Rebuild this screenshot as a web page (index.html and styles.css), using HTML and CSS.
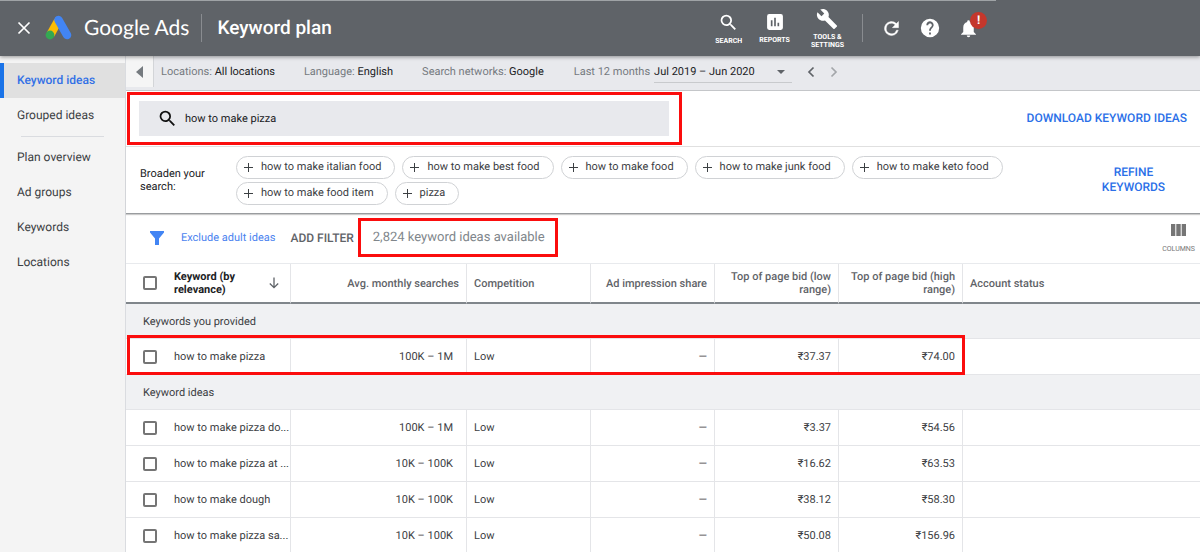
FILE: index.html
```html
<!DOCTYPE html>
<html lang="en">
<head>
<meta charset="utf-8">
<meta name="viewport" content="width=device-width, initial-scale=1">
<title>Keyword plan - Google Ads</title>
<link rel="stylesheet" href="styles.css">
</head>
<body>
<div class="app">
  <header class="topbar">
    <button class="icon-btn close" aria-label="Close"><svg width="14" height="14" viewBox="0 0 14 14"><path d="M1.5 1.5l11 11M12.500 1.500l-11 11" fill="none" stroke="#fff" stroke-width="1.700"/></svg></button>
    <a class="brand" href="#">
      <svg width="28" height="26" viewBox="0 0 28 26"><path d="M5.500 19.500L13 6" stroke="#fbbc04" stroke-width="8.500" fill="none"/><path d="M13.500 5L22 20" stroke="#4285f4" stroke-width="8.500" stroke-linecap="round"/><circle cx="5" cy="20" r="4.400" fill="#34a853"/></svg>
      <span class="brand-name">Google Ads</span>
    </a>
    <h1 class="page-title">Keyword plan</h1>
    <div class="tools">
      <button class="tool"><svg width="21" height="21" viewBox="0 0 24 24"><path fill="#fff" d="M15.5 14h-.79l-.28-.27A6.471 6.471 0 0 0 16 9.5 6.5 6.5 0 1 0 9.5 16c1.61 0 3.09-.59 4.23-1.57l.27.28v.79l5 4.99L20.49 19l-4.99-5zm-6 0C7.01 14 5 11.99 5 9.5S7.01 5 9.5 5 14 7.01 14 9.5 11.99 14 9.5 14z"/></svg><span>SEARCH</span></button>
      <button class="tool"><svg width="20" height="20" viewBox="0 0 24 24"><path fill="#fff" d="M19 2.500H5a2.500 2.500 0 0 0-2.500 2.500v14A2.500 2.500 0 0 0 5 21.500h14a2.500 2.500 0 0 0 2.500-2.500V5A2.500 2.500 0 0 0 19 2.500zM9 17H7v-7h2zm4 0h-2V7h2zm4 0h-2v-4h2z"/></svg><span>REPORTS</span></button>
      <button class="tool tool-wide"><svg width="22" height="22" viewBox="0 0 24 24"><path fill="#fff" d="M22.700 19l-9.100-9.100c.9-2.300.4-5-1.500-6.900-2-2-5-2.400-7.400-1.300L9 6 6 9 1.600 4.700C.4 7.100.9 10.100 2.900 12.100c1.900 1.900 4.600 2.400 6.900 1.500l9.100 9.100c.4.4 1 .4 1.400 0l2.300-2.300c.5-.4.5-1.100.1-1.400z"/></svg><span>TOOLS &amp;<br>SETTINGS</span></button>
    </div>
    <div class="actions">
      <button class="icon-btn" aria-label="Refresh"><svg width="21" height="21" viewBox="0 0 24 24"><path fill="#fff" stroke="#fff" stroke-width=".5" d="M17.650 6.350A8 8 0 1 0 19.730 14h-2.080A6 6 0 1 1 12 6c1.660 0 3.140.69 4.220 1.780L13 11h7V4z"/></svg></button>
      <button class="icon-btn" aria-label="Help"><svg width="22" height="22" viewBox="0 0 24 24"><path fill="#fff" d="M12 2a10 10 0 1 0 0 20 10 10 0 0 0 0-20zm1 17h-2v-2h2zm2.070-7.750l-.9.920C13.450 12.900 13 13.500 13 15h-2v-.5c0-1.100.45-2.100 1.170-2.830l1.240-1.260A2 2 0 1 0 10 9H8a4 4 0 1 1 7.070 2.250z"/></svg></button>
      <button class="icon-btn bell" aria-label="Notifications"><svg width="21" height="21" viewBox="0 0 24 24"><path fill="#fff" d="M12 22a2 2 0 0 0 2-2h-4a2 2 0 0 0 2 2zm6-6v-5c0-3.070-1.640-5.640-4.500-6.320V4a1.500 1.500 0 0 0-3 0v.68C7.630 5.360 6 7.920 6 11v5l-2.500 2.500v.5h17v-.5z"/></svg><span class="badge">!</span></button>
    </div>
  </header>

  <div class="body">
    <nav class="sidebar">
      <a class="nav-item active" href="#">Keyword ideas</a>
      <a class="nav-item" href="#">Grouped ideas</a>
      <hr class="nav-rule">
      <a class="nav-item" href="#">Plan overview</a>
      <a class="nav-item" href="#">Ad groups</a>
      <a class="nav-item" href="#">Keywords</a>
      <a class="nav-item" href="#">Locations</a>
    </nav>

    <main class="main">
      <div class="context">
        <button class="collapse" aria-label="Collapse menu"><svg width="7" height="12" viewBox="0 0 7 12"><path d="M7 0v12L0 6z" fill="#757a7f"/></svg></button>
        <div class="settings">
          <span class="setting">Locations: <b>All locations</b></span>
          <span class="setting">Language: <b>English</b></span>
          <span class="setting">Search networks: <b>Google</b></span>
        </div>
        <span class="period">Last 12 months</span>
        <button class="range">Jul 2019 – Jun 2020<svg width="8" height="4" viewBox="0 0 8 4"><path d="M0 0h8L4 4z" fill="#5f6368"/></svg></button>
        <button class="icon-btn step" aria-label="Previous period"><svg width="8" height="12" viewBox="0 0 8 12"><path d="M6.500 1.500L2 6l4.500 4.500" fill="none" stroke="#5f6368" stroke-width="1.700"/></svg></button>
        <button class="icon-btn step" aria-label="Next period"><svg width="8" height="12" viewBox="0 0 8 12"><path d="M1.500 1.500L6 6l-4.500 4.500" fill="none" stroke="#a3a6aa" stroke-width="1.700"/></svg></button>
      </div>

      <section class="panel">
        <div class="search-row">
          <div class="marked search-mark">
            <label class="search-box">
              <svg width="21" height="21" viewBox="0 0 24 24"><path fill="#111" d="M15.5 14h-.79l-.28-.27A6.471 6.471 0 0 0 16 9.5 6.5 6.5 0 1 0 9.5 16c1.61 0 3.09-.59 4.23-1.57l.27.28v.79l5 4.99L20.49 19l-4.99-5zm-6 0C7.01 14 5 11.99 5 9.5S7.01 5 9.5 5 14 7.01 14 9.5 11.99 14 9.5 14z"/></svg>
              <input class="search-input" type="text" aria-label="Search keywords" value="how to make pizza">
            </label>
          </div>
          <button class="link-btn">DOWNLOAD KEYWORD IDEAS</button>
        </div>
        <div class="broaden">
          <span class="broaden-label">Broaden your search:</span>
          <div class="chips">
            <button class="chip"><i class="plus"></i>how to make italian food</button>
            <button class="chip"><i class="plus"></i>how to make best food</button>
            <button class="chip"><i class="plus"></i>how to make food</button>
            <button class="chip"><i class="plus"></i>how to make junk food</button>
            <button class="chip"><i class="plus"></i>how to make keto food</button>
            <button class="chip"><i class="plus"></i>how to make food item</button>
            <button class="chip"><i class="plus"></i>pizza</button>
          </div>
          <button class="link-btn refine">REFINE KEYWORDS</button>
        </div>
      </section>

      <div class="filters">
        <svg width="14" height="14" viewBox="0 0 14 14"><path d="M0 0h14v1.500L9 7.500V14H5V7.500L0 1.500z" fill="#4285f4"/></svg>
        <a class="filter-link" href="#">Exclude adult ideas</a>
        <button class="add-filter">ADD FILTER</button>
        <span class="marked count">2,824 keyword ideas available</span>
        <button class="columns"><svg width="15" height="12" viewBox="0 0 15 12"><path d="M0 0h4.300v12H0zM5.300 0h4.400v12H5.300zM10.700 0H15v12h-4.300z" fill="#757575"/></svg>COLUMNS</button>
      </div>

      <div class="table-area">
        <table class="grid">
          <colgroup><col class="c-check"><col class="c-key"><col class="c-avg"><col class="c-num"><col class="c-num"><col class="c-num"><col class="c-num"><col></colgroup>
          <thead>
            <tr>
              <th class="check"><input type="checkbox" aria-label="Select all"></th>
              <th class="key"><span class="sort">Keyword (by relevance)<svg width="10" height="12" viewBox="0 0 10 12"><path d="M5 .5v10M.8 6.500L5 10.700l4.200-4.200" fill="none" stroke="#5f6368" stroke-width="1.300"/></svg></span></th>
              <th class="num">Avg. monthly searches</th>
              <th>Competition</th>
              <th class="num">Ad impression share</th>
              <th class="num">Top of page bid (low range)</th>
              <th class="num">Top of page bid (high range)</th>
              <th>Account status</th>
            </tr>
          </thead>
          <tbody>
            <tr class="group"><td colspan="8">Keywords you provided</td></tr>
            <tr class="provided">
              <td class="check"><input type="checkbox" aria-label="Select how to make pizza"><span class="marked row-mark"></span></td>
              <td class="key">how to make pizza</td><td class="num avg">100K – 1M</td><td>Low</td><td class="num">—</td><td class="num">₹37.37</td><td class="num">₹74.00</td><td></td>
            </tr>
            <tr class="group"><td colspan="8">Keyword ideas</td></tr>
            <tr><td class="check"><input type="checkbox" aria-label="Select how to make pizza dough"></td><td class="key">how to make pizza do...</td><td class="num avg">100K – 1M</td><td>Low</td><td class="num">—</td><td class="num">₹3.37</td><td class="num">₹54.56</td><td></td></tr>
            <tr><td class="check"><input type="checkbox" aria-label="Select how to make pizza at home"></td><td class="key">how to make pizza at ...</td><td class="num avg">10K – 100K</td><td>Low</td><td class="num">—</td><td class="num">₹16.62</td><td class="num">₹63.53</td><td></td></tr>
            <tr><td class="check"><input type="checkbox" aria-label="Select how to make dough"></td><td class="key">how to make dough</td><td class="num avg">10K – 100K</td><td>Low</td><td class="num">—</td><td class="num">₹38.12</td><td class="num">₹58.30</td><td></td></tr>
            <tr><td class="check"><input type="checkbox" aria-label="Select how to make pizza sauce"></td><td class="key">how to make pizza sa...</td><td class="num avg">10K – 100K</td><td>Low</td><td class="num">—</td><td class="num">₹50.08</td><td class="num">₹156.96</td><td></td></tr>
          </tbody>
        </table>
      </div>
    </main>
  </div>
</div>
</body>
</html>
```

FILE: styles.css
```css
* { box-sizing: border-box; }
body { margin: 0; font-family: Roboto, "Liberation Sans", sans-serif; font-size: 11px; line-height: 14px; text-rendering: geometricPrecision; color: #3c4043; background: #fff; }
button { font: inherit; color: inherit; text-rendering: inherit; background: none; border: 0; padding: 0; cursor: pointer; }
a { color: inherit; text-decoration: none; }
svg { display: block; flex: none; }
.app { height: 100vh; display: flex; flex-direction: column; overflow: hidden; }
.marked { border: 3px solid #fb0d0d; }

/* Top bar */
.topbar { position: relative; z-index: 2; flex: none; height: 56px; display: flex; align-items: center; padding: 0 17px; color: #fff; background: linear-gradient(#9fa3a6, #9fa3a6) 0 0 / 83% 1px no-repeat #5f6368; box-shadow: 0 1px 4px rgba(0, 0, 0, .4); }
.icon-btn { display: flex; align-items: center; justify-content: center; }
.brand { display: flex; align-items: center; gap: 11px; margin-left: 14px; }
.brand-name { font-family: Lato, sans-serif; font-size: 21px; line-height: 28px; }
.page-title { margin: 0 0 0 12px; padding-left: 15px; border-left: 1px solid #898c90; font-size: 19px; line-height: 28px; font-weight: 500; white-space: nowrap; }
.tools { display: flex; gap: 17px; margin-left: auto; padding-right: 18px; border-right: 1px solid #898c90; height: 28px; align-items: center; }
.tool { display: flex; flex-direction: column; align-items: center; gap: 4px; font-size: 7px; line-height: 8px; font-weight: 700; }
.tool-wide { gap: 3px; margin-left: 4px; }
.actions { display: flex; align-items: center; gap: 17px; margin: 0 204px 0 18px; }
.bell { position: relative; }
.badge { position: absolute; left: 12px; top: -6px; width: 17px; height: 17px; border-radius: 50%; background: #c5372c; color: #fff; font-size: 12px; line-height: 17px; font-weight: 700; }

/* Side navigation */
.body { flex: 1; min-height: 0; display: flex; }
.sidebar { flex: none; width: 125px; padding-top: 7px; background: #f4f4f4; }
.nav-item { display: flex; align-items: center; height: 35px; padding: 0 0 1px 17px; font-size: 12px; }
.nav-item.active { border-left: 4px solid #1a73e8; padding-left: 13px; background: #e0e0e0; color: #3371e6; font-weight: 500; }
.nav-rule { margin: 3px 21px; border: 0; height: 1px; background: #dadce0; }

/* Plan settings */
.main { flex: 1; min-width: 0; display: flex; flex-direction: column; border-left: 1px solid #dadce0; }
.context { flex: none; height: 35px; display: flex; align-items: flex-start; background: #e8e9ed; border-bottom: 1px solid #c4c6c9; color: #757a7f; white-space: nowrap; }
.collapse { width: 28px; height: 31px; padding-left: 10px; background: #f5f5f5; border-right: 1px solid #d3d5d8; }
.settings { display: flex; gap: 29px; padding: 9px 0 0 7px; }
.setting b { font-weight: 400; color: #202124; }
.period { margin-left: 30px; padding-top: 9px; }
.range { display: flex; align-items: center; gap: 22px; margin-left: 4px; padding: 9px 7px 3px 0; color: #202124; border-bottom: 1px solid #c8cacd; }
.step { height: 32px; margin-left: 15px; }

/* Search panel */
.panel { flex: none; border-bottom: 1px solid #999c9f; box-shadow: 0 1px 1px rgba(0, 0, 0, .2); }
.search-row { display: flex; align-items: center; justify-content: space-between; height: 56px; padding: 0 13px 0 1px; border-bottom: 1px solid #e0e0e0; }
.search-mark { flex: 0 1 555px; padding: 6px 10px 6px 9px; }
.search-box { display: flex; align-items: center; gap: 7px; height: 35px; padding-left: 18px; background: #e8e9ed; }
.search-input { flex: 1; min-width: 0; border: 0; padding: 0; background: none; font: inherit; text-rendering: inherit; color: #202124; outline: 0; }
.link-btn { font-size: 12px; font-weight: 500; color: #2b70e8; line-height: 15px; }
.broaden { display: flex; align-items: center; height: 66px; padding: 0 33px 0 14px; color: #202124; }
.broaden-label { flex: none; width: 96px; padding-right: 20px; line-height: 13px; }
.chips { flex: 1; display: flex; flex-wrap: wrap; gap: 3px 7px; padding-right: 16px; }
.chip { display: flex; align-items: center; gap: 8px; height: 23px; padding: 0 13px 0 7px; border: 1px solid #d0d2d5; border-radius: 12px; color: #3c4043; }
.plus { width: 9px; height: 9px; background: linear-gradient(#3c4043, #3c4043) 50% 50% / 9px 1px no-repeat, linear-gradient(#3c4043, #3c4043) 50% 50% / 1px 9px no-repeat; }
.refine { width: 67px; }

/* Filter bar */
.filters { flex: none; height: 49px; display: flex; align-items: center; padding: 0 5px 2px 24px; white-space: nowrap; }
.filter-link { margin-left: 17px; color: #4b83ef; }
.add-filter { margin-left: 15px; font-size: 12px; font-weight: 500; color: #5f6368; }
.count { margin-left: 4px; padding: 9px 10px 8px 12px; font-size: 13px; line-height: 16px; color: #80868b; }
.columns { display: flex; flex-direction: column; align-items: center; gap: 9px; margin-left: auto; padding-top: 2px; font-size: 7px; line-height: 8px; color: #757575; }

/* Keyword table */
.table-area { flex: 1; min-height: 0; overflow: hidden; }
.grid { width: 100%; table-layout: fixed; border-collapse: separate; border-spacing: 0; border-top: 1px solid #e8eaed; line-height: 13px; }
.c-check { width: 41px; }
.c-key { width: 124px; }
.c-avg { width: 176px; }
.c-num { width: 124px; }
.grid th, .grid td { height: 36px; padding: 0 7px; text-align: left; border-right: 1px solid #e4e5e8; border-bottom: 1px solid #e4e5e8; }
.grid th { height: 40px; font-weight: 500; color: #5f6368; border-bottom: 2px solid #80868b; }
.grid td:last-child, .grid th:last-child { border-right: 0; }
.grid .check { padding: 0 0 0 17px; border-right: 0; }
.grid .key { padding-left: 7px; white-space: nowrap; }
.grid th.key { white-space: normal; color: #202124; font-weight: 700; }
.grid .num { text-align: right; }
.grid td.avg { padding-right: 13px; }
.grid .group td { height: 35px; padding-left: 17px; background: #f0f1f3; }
.sort { display: flex; align-items: center; justify-content: space-between; gap: 30px; padding-right: 4px; }
.grid input { appearance: none; display: block; width: 14px; height: 14px; margin: 0; border: 2px solid #757575; border-radius: 2px; background: #fff; }
.provided { position: relative; }
.row-mark { position: absolute; left: 1px; top: -4px; width: 838px; height: 40px; pointer-events: none; }
```
